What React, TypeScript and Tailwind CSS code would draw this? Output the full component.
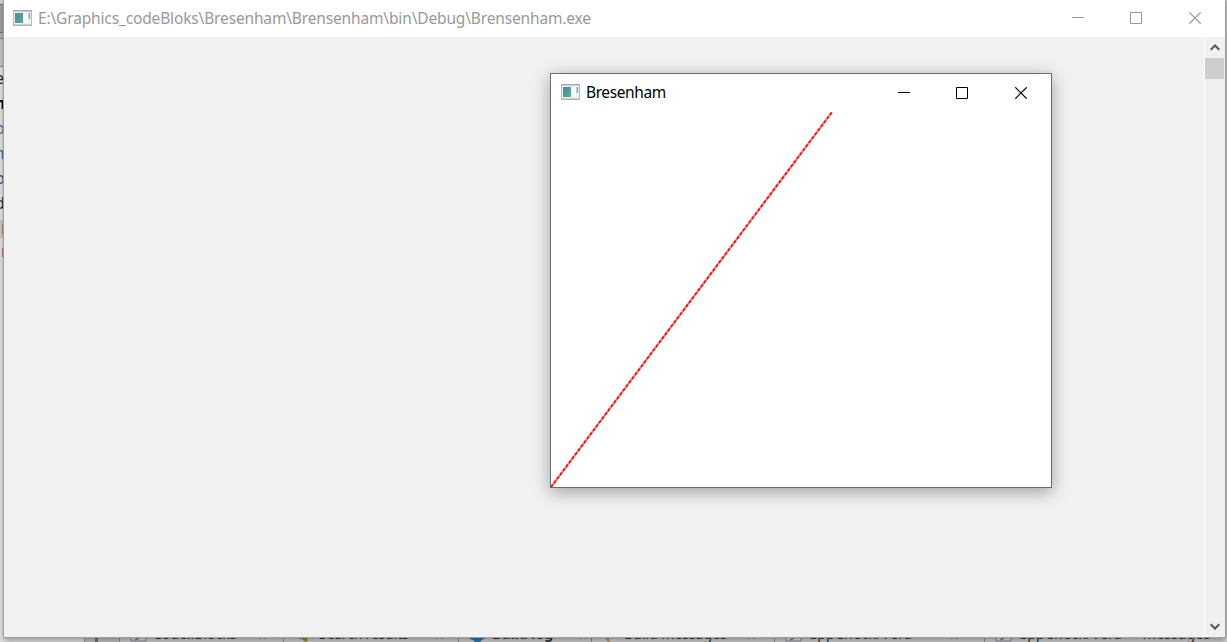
import React from 'react';

function ConsoleIcon() {
  return (
    <svg width="19" height="16" viewBox="0 0 19 16" className="block shrink-0">
      <defs>
        <linearGradient id="pane" x1="0" y1="0" x2="1" y2="1">
          <stop offset="0" stopColor="#4e83a8" />
          <stop offset="1" stopColor="#57b184" />
        </linearGradient>
      </defs>
      <rect x="0.5" y="0.5" width="18" height="15" fill="#eef0f2" stroke="#b9bdc2" />
      <rect x="0" y="0" width="19" height="1.5" fill="#a6acb3" />
      <rect x="0" y="14.5" width="19" height="1.5" fill="#afb3b6" />
      <rect x="2" y="3" width="8" height="10" fill="url(#pane)" />
      <rect x="11" y="3" width="4" height="10" fill="#f8f9f9" />
      <rect x="15.5" y="3" width="1.7" height="6" fill="url(#pane)" opacity="0.7" />
    </svg>
  );
}

function Controls({ color }: { color: string }) {
  return (
    <svg width="130" height="12" viewBox="0 0 130 12" fill="none" stroke={color} className="block shrink-0">
      <path d="M0 5.5H12" />
      <path d="M58.5 .5H69.5V11.5H58.5Z" />
      <path d="M117.3 .3L128.7 11.7M128.7 .3L117.3 11.7" strokeWidth="1.2" />
    </svg>
  );
}

function Chevron({ down }: { down?: boolean }) {
  return (
    <svg width="10" height="7" viewBox="0 0 10 7" fill="none" stroke="#555" strokeWidth="2" className={down ? 'block rotate-180' : 'block'}>
      <path d="M.7 5.8L5 1.5L9.3 5.8" />
    </svg>
  );
}

function TabIcon({ kind }: { kind: string }) {
  return (
    <svg width="18" height="4" viewBox="0 0 18 4" className="block shrink-0">
      {kind === 'page' && (
        <>
          <path d="M1 0V3H16V0" fill="#dfe2ea" stroke="#858994" />
          <path d="M5 2L9 0" stroke="#ce6248" strokeWidth="1.5" />
        </>
      )}
      {kind === 'search' && <path d="M3 0H11L12 3L9 4L6 1H3Z" fill="#a88a19" />}
      {kind === 'gear' && <path d="M1 0H16L13 2L11 4H6L4 2L1 1Z" fill="#207fc4" />}
      {kind === 'pencil' && <path d="M4 0H8L9 4H7Z" fill="#c99636" />}
    </svg>
  );
}

const tabs = [
  { label: 'Code::Blocks', kind: 'page', cell: 'w-[164px]', text: 'w-[85px]', pad: 'pl-[10px]', style: '' },
  { label: 'Search results', kind: 'search', cell: 'w-[175px]', text: 'w-[96px]', pad: 'pl-[12px]', style: 'tracking-[-0.2px]' },
  { label: 'Build log', kind: 'gear', cell: 'w-[133px]', text: 'w-[67px]', pad: 'pl-[10px]', style: 'font-bold' },
  { label: 'Build messages', kind: 'pencil', cell: 'w-[183px]', text: 'w-[103px]', pad: 'pl-[9px]', style: '' },
  { label: 'CppCheck/Vera++', kind: 'page', cell: 'w-[210px]', text: 'w-[122px]', pad: 'pl-[10px]', style: 'tracking-[0.3px]' },
  { label: 'CppCheck/Vera++ messages', kind: 'page', cell: 'w-[243px]', text: 'w-[196px]', pad: 'pl-[10px]', style: 'tracking-[0.3px]' },
];

const edge = [
  ['e', 'text-[#252525]'],
  ['m', 'text-black font-bold'],
  ['o', 'text-[#467baa]'],
  ['m', 'text-[#287ba8]'],
  ['o', 'text-[#395b86]'],
  ['d', 'text-[#252a43]'],
];

export default function App() {
  return (
    <div className="relative flex h-[642px] w-[1227px] flex-col overflow-hidden bg-[#dedede] font-['Noto_Sans','Noto_Sans_CJK_SC',sans-serif]">
      <div className="flex h-[638px]">
        <div className="h-full w-[3px] overflow-hidden bg-[#efefef]">
          <div className="h-[4px] bg-[#d5d5d5]" />
          <div className="h-[29px] border-t border-b border-[#777] bg-[#a9a9a9]" />
          <div className="h-[6px] border-b border-[#858585] bg-[#c0c0c0]" />
          <div className="h-[28px] border-b border-[#929292] bg-[#d2d2d2]" />
          {edge.map(([letter, tone], i) => (
            <div key={i} className={`-ml-[5px] h-[25px] w-[20px] text-[16px] leading-[23px] ${tone}`}>{letter}</div>
          ))}
          <div className="mt-[3px] h-[18px] bg-[#d5d5d5] pt-[4px]"><div className="ml-[2px] h-[11px] bg-[#b69784]" /></div>
          <div className="mt-[10px] ml-[2px] h-[9px] bg-[#a98f80]" />
        </div>
        <div className="relative z-10 flex w-[1223px] shrink-0 flex-col border-r border-b border-l border-[#a0a0a0] bg-[#f1f1f1] shadow-[0_2px_7px_rgba(0,0,0,0.4)]">
          <div className="flex h-[37px] shrink-0 items-start bg-white pl-[9px]">
            <div className="mt-[10px]"><ConsoleIcon /></div>
            <span className="mt-[7px] ml-[6px] grow text-[15.5px] leading-[22px] tracking-[-0.15px] whitespace-nowrap text-[#999]">
              E:\Graphics_codeBloks\Bresenham\Brensenham\bin\Debug\Brensenham.exe
            </span>
            <div className="mt-[12px] mr-[23px]"><Controls color="#999" /></div>
          </div>
          <div className="flex grow">
            <div className="grow border-r border-white" />
            <div className="flex w-[20px] flex-col items-start bg-[#f0f0f0]">
              <div className="flex h-[21px] items-center pl-[4.5px]"><Chevron /></div>
              <div className="h-[21px] w-[19px] bg-[#cdcdcd]" />
              <div className="grow" />
              <div className="flex h-[21px] items-center pl-[4.5px]"><Chevron down /></div>
            </div>
          </div>
        </div>
        <div className="w-px grow bg-[#cfcfcf]" />
      </div>
      <div className="flex h-[4px] bg-[#c5c5c5]">
        <div className="w-[84px] bg-[#e4e4e4]" />
        <div className="flex w-[35px] border-l border-[#999]"><div className="ml-[10px] w-[3px] bg-[#777]" /></div>
        {tabs.map((tab) => (
          <div key={tab.label} className={`flex h-[4px] shrink-0 items-start overflow-hidden border-l border-[#929292] bg-[#d2d2d2] ${tab.cell} ${tab.pad}`}>
            <TabIcon kind={tab.kind} />
            <div className={`-mt-[14px] shrink-0 text-[14px] leading-[20px] whitespace-nowrap text-[#333] ${tab.text}`}>
              <span className={`ml-[5px] ${tab.style}`}>{tab.label}</span>
            </div>
            <span className="ml-[25px] -mt-[13px] text-[15px] leading-[20px] text-[#777]">×</span>
          </div>
        ))}
      </div>
      <div className="absolute top-[73px] left-[550px] z-20 flex h-[415px] w-[502px] flex-col border border-[#6b6b6b] bg-white shadow-[0_4px_16px_rgba(0,0,0,0.34)]">
        <div className="flex h-[38px] shrink-0 items-start pl-[10px]">
          <div className="mt-[10px]"><ConsoleIcon /></div>
          <span className="mt-[7px] ml-[6px] grow text-[15.5px] leading-[22px] tracking-[-0.4px] text-black">Bresenham</span>
          <div className="mt-[13px] mr-[23px]"><Controls color="#000" /></div>
        </div>
        <svg width="500" height="375" viewBox="0 0 500 375" className="block">
          <path d="M0 375L281 0" stroke="#ff8080" strokeWidth="2.2" />
          <path d="M0 375L281 0" stroke="#ff0000" strokeWidth="1.6" strokeDasharray="3 2" />
        </svg>
      </div>
    </div>
  );
}
